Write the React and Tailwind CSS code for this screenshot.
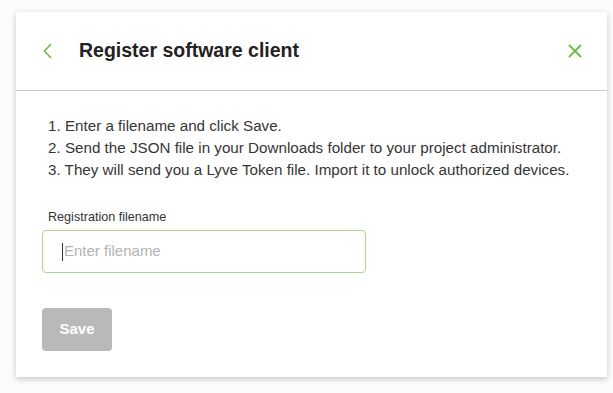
import { X } from 'lucide-react'

export default function App() {
  return (
    <div className="w-[613px] h-[393px] bg-[#fcfcfc] pt-3 pl-4 pr-[6px] font-['Liberation_Sans',sans-serif]">
      <div className="bg-white h-[365px] shadow-[0_2px_6px_rgba(0,0,0,0.22)] flex flex-col">
        {/* Header */}
        <div className="h-[79px] flex items-center border-b border-[#c9c9c9] pl-[27px] pr-[21px]">
          <svg width="9" height="16" viewBox="0 0 9 16" fill="none" className="text-[#6ebe49]">
            <polyline points="7.5,1.5 1.5,8 7.5,14.5" stroke="currentColor" strokeWidth="1.7" strokeLinecap="round" strokeLinejoin="round" />
          </svg>
          <h1 className="ml-[27px] text-[19.5px] font-bold text-[#222]">Register software client</h1>
          <X className="ml-auto w-[22px] h-[22px] text-[#6ebe49]" strokeWidth={2.1} />
        </div>

        {/* Body */}
        <div className="pl-[32px] pt-[24px] text-[15.2px] text-[#363636] leading-[22px]">
          <p>1. Enter a filename and click Save.</p>
          <p>2. Send the JSON file in your Downloads folder to your project administrator.</p>
          <p>3. They will send you a Lyve Token file. Import it to unlock authorized devices.</p>
        </div>

        <div className="pl-[26px] pt-[29px]">
          <label className="block pl-[6px] text-[12.6px] text-[#333] leading-[15px]">Registration filename</label>
          <div className="mt-[5px] w-[324px] h-[43px] border border-[#a9d88f] rounded-[4px] flex items-center px-[19px]">
            <span className="w-px h-[18px] bg-[#333] mr-px"></span>
            <span className="text-[15px] text-[#b3b3b3]">Enter filename</span>
          </div>
          <button className="mt-[35px] w-[70px] h-[43px] rounded-[4px] bg-[#b9b9b9] text-white font-bold text-[15px]">
            Save
          </button>
        </div>
      </div>
    </div>
  )
}
